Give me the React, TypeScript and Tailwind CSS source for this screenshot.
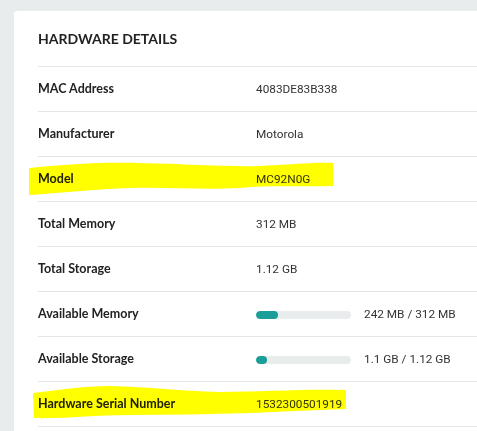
import React from 'react';

type Row = { label: string; value?: string; bar?: number };

const rows: Row[] = [
  { label: 'MAC Address', value: '4083DE83B338' },
  { label: 'Manufacturer', value: 'Motorola' },
  { label: 'Model', value: 'MC92N0G' },
  { label: 'Total Memory', value: '312 MB' },
  { label: 'Total Storage', value: '1.12 GB' },
  { label: 'Available Memory', value: '242 MB / 312 MB', bar: 22 },
  { label: 'Available Storage', value: '1.1 GB / 1.12 GB', bar: 11 },
  { label: 'Hardware Serial Number', value: '1532300501919' },
];

// hand-drawn marker strokes that were added on top of the screenshot
const Highlights: React.FC = () => (
  <svg className="absolute inset-0 pointer-events-none mix-blend-multiply" width="477" height="431" viewBox="0 0 477 431">
    <path
      d="M29 168 C70 164 100 162 140 163 C190 164 230 167 260 166 C290 165 310 162 333 163 L333 186 C300 187 270 185 240 188 C200 190 170 187 130 188 C95 189 60 193 29 195 Z"
      fill="#ffff00"
    />
    <path
      d="M33 393 C60 390 80 386 110 386 C150 387 180 391 220 392 C260 392 300 389 346 390 L346 409 C310 410 280 412 250 413 C210 414 170 415 130 415 C95 415 60 419 34 418 Z"
      fill="#ffff00"
    />
  </svg>
);

const App: React.FC = () => {
  return (
    <div className="relative w-[477px] h-[431px] overflow-hidden bg-[#e9eced]">
      <div className="ml-[14px] mt-[11px] bg-white rounded-tl-[3px] pl-6 h-[440px]">
        <div className="h-[56px] flex items-center border-b border-[#e3e6e8]">
          <h2 className="text-[14px] font-bold text-[#222] [font-family:Lato,sans-serif]">HARDWARE DETAILS</h2>
        </div>
        {rows.map(r => (
          <div key={r.label} className="h-[45px] pt-px flex items-center border-b border-[#e3e6e8]">
            <div className="w-[218px] shrink-0 text-[12.5px] font-bold text-[#222] [font-family:Lato,sans-serif]">{r.label}</div>
            {r.bar !== undefined && (
              <div className="w-[95px] h-[8px] rounded-full bg-[#e9eced] mr-[13px] overflow-hidden">
                <div className="h-full rounded-full bg-[#1a9e99]" style={{ width: `${r.bar}px` }} />
              </div>
            )}
            <div className="text-[11.8px] text-[#333] [font-family:Roboto,sans-serif]">{r.value}</div>
          </div>
        ))}
      </div>
      <Highlights />
    </div>
  );
};

export default App;
